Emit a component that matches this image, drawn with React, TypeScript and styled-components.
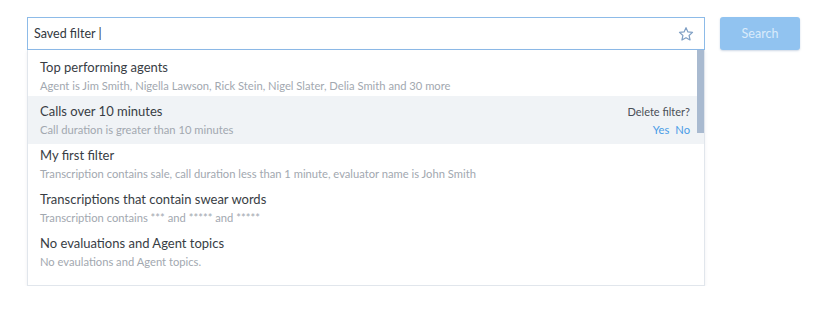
import React from "react";
import styled, { createGlobalStyle } from "styled-components";

const Global = createGlobalStyle`
  html, body { margin: 0; padding: 0; background: #ffffff; }
  body { font-family: "Lato", "Open Sans", sans-serif; }
`;

const Page = styled.div`
  display: flex;
  align-items: flex-start;
  gap: 15px;
  padding: 17px 0 0 27px;
`;

const Combo = styled.div`
  width: 678px;
  display: flex;
  flex-direction: column;
`;

const InputBox = styled.div`
  height: 33px;
  box-sizing: border-box;
  border: 1px solid #8dbbe8;
  display: flex;
  align-items: center;
  padding: 0 10px 0 6px;
  background: #fff;
`;

const InputText = styled.div`
  flex: 1;
  font-size: 12.5px;
  color: #333840;
`;

const Dropdown = styled.div`
  position: relative;
  height: 236px;
  box-sizing: border-box;
  border: 1px solid #e1e6ec;
  border-top: none;
  box-shadow: 0 1px 3px rgba(40, 60, 90, 0.08);
  background: #fff;
  padding-top: 2px;
  overflow: hidden;
`;

const Thumb = styled.div`
  position: absolute;
  top: 0;
  right: 0;
  width: 7px;
  height: 83px;
  background: #a9bad0;
`;

const Row = styled.div<{ $active?: boolean }>`
  height: 44px;
  box-sizing: border-box;
  padding: 7px 14px 0 12px;
  display: flex;
  justify-content: space-between;
  background: ${(p) => (p.$active ? "#f0f3f6" : "transparent")};
  ${(p) => (p.$active ? "height: 48px; margin-bottom: -4px;" : "")}
`;

const TextCol = styled.div`
  display: flex;
  flex-direction: column;
  gap: 2px;
`;

const Title = styled.div`
  font-size: 13px;
  color: #383d44;
  line-height: 17px;
`;

const Sub = styled.div`
  font-size: 11.2px;
  color: #a2a8b0;
  line-height: 15px;
`;

const DeleteCol = styled.div`
  display: flex;
  flex-direction: column;
  align-items: flex-end;
  gap: 2px;
`;

const DeleteQ = styled.div`
  font-size: 11px;
  color: #4a4f56;
  line-height: 17px;
`;

const Links = styled.div`
  display: flex;
  gap: 6px;
  font-size: 11.2px;
  line-height: 15px;
  color: #4a9be6;
`;

const SearchButton = styled.button`
  width: 80px;
  height: 33px;
  border: none;
  border-radius: 3px;
  background: #91c3f0;
  color: #d9ebfb;
  font-family: "Lato", sans-serif;
  font-size: 12.5px;
  box-shadow: 0 1px 2px rgba(60, 100, 150, 0.25);
  padding: 0;
`;

const Star = () => (
  <svg width="16" height="16" viewBox="0 0 24 24" fill="none" stroke="#7f9fc4" strokeWidth="1.8" strokeLinejoin="round">
    <polygon points="12,2.5 14.9,8.9 21.8,9.6 16.6,14.2 18.1,21 12,17.5 5.9,21 7.4,14.2 2.2,9.6 9.1,8.9" />
  </svg>
);

const items = [
  {
    title: "Top performing agents",
    sub: "Agent is Jim Smith, Nigella Lawson, Rick Stein, Nigel Slater, Delia Smith and 30 more",
  },
  { title: "Calls over 10 minutes", sub: "Call duration is greater than 10 minutes", active: true },
  {
    title: "My first filter",
    sub: "Transcription contains sale, call duration less than 1 minute, evaluator name is John Smith",
  },
  { title: "Transcriptions that contain swear words", sub: "Transcription contains *** and ***** and *****" },
  { title: "No evaluations and Agent topics", sub: "No evaulations and Agent topics." },
];

export default function App() {
  return (
    <>
      <Global />
      <Page>
        <Combo>
          <InputBox>
            <InputText>Saved filter |</InputText>
            <Star />
          </InputBox>
          <Dropdown>
            <Thumb />
            {items.map((it) => (
              <Row key={it.title} $active={it.active}>
                <TextCol>
                  <Title>{it.title}</Title>
                  <Sub>{it.sub}</Sub>
                </TextCol>
                {it.active && (
                  <DeleteCol>
                    <DeleteQ>Delete filter?</DeleteQ>
                    <Links>
                      <span>Yes</span>
                      <span>No</span>
                    </Links>
                  </DeleteCol>
                )}
              </Row>
            ))}
          </Dropdown>
        </Combo>
        <SearchButton>Search</SearchButton>
      </Page>
    </>
  );
}
